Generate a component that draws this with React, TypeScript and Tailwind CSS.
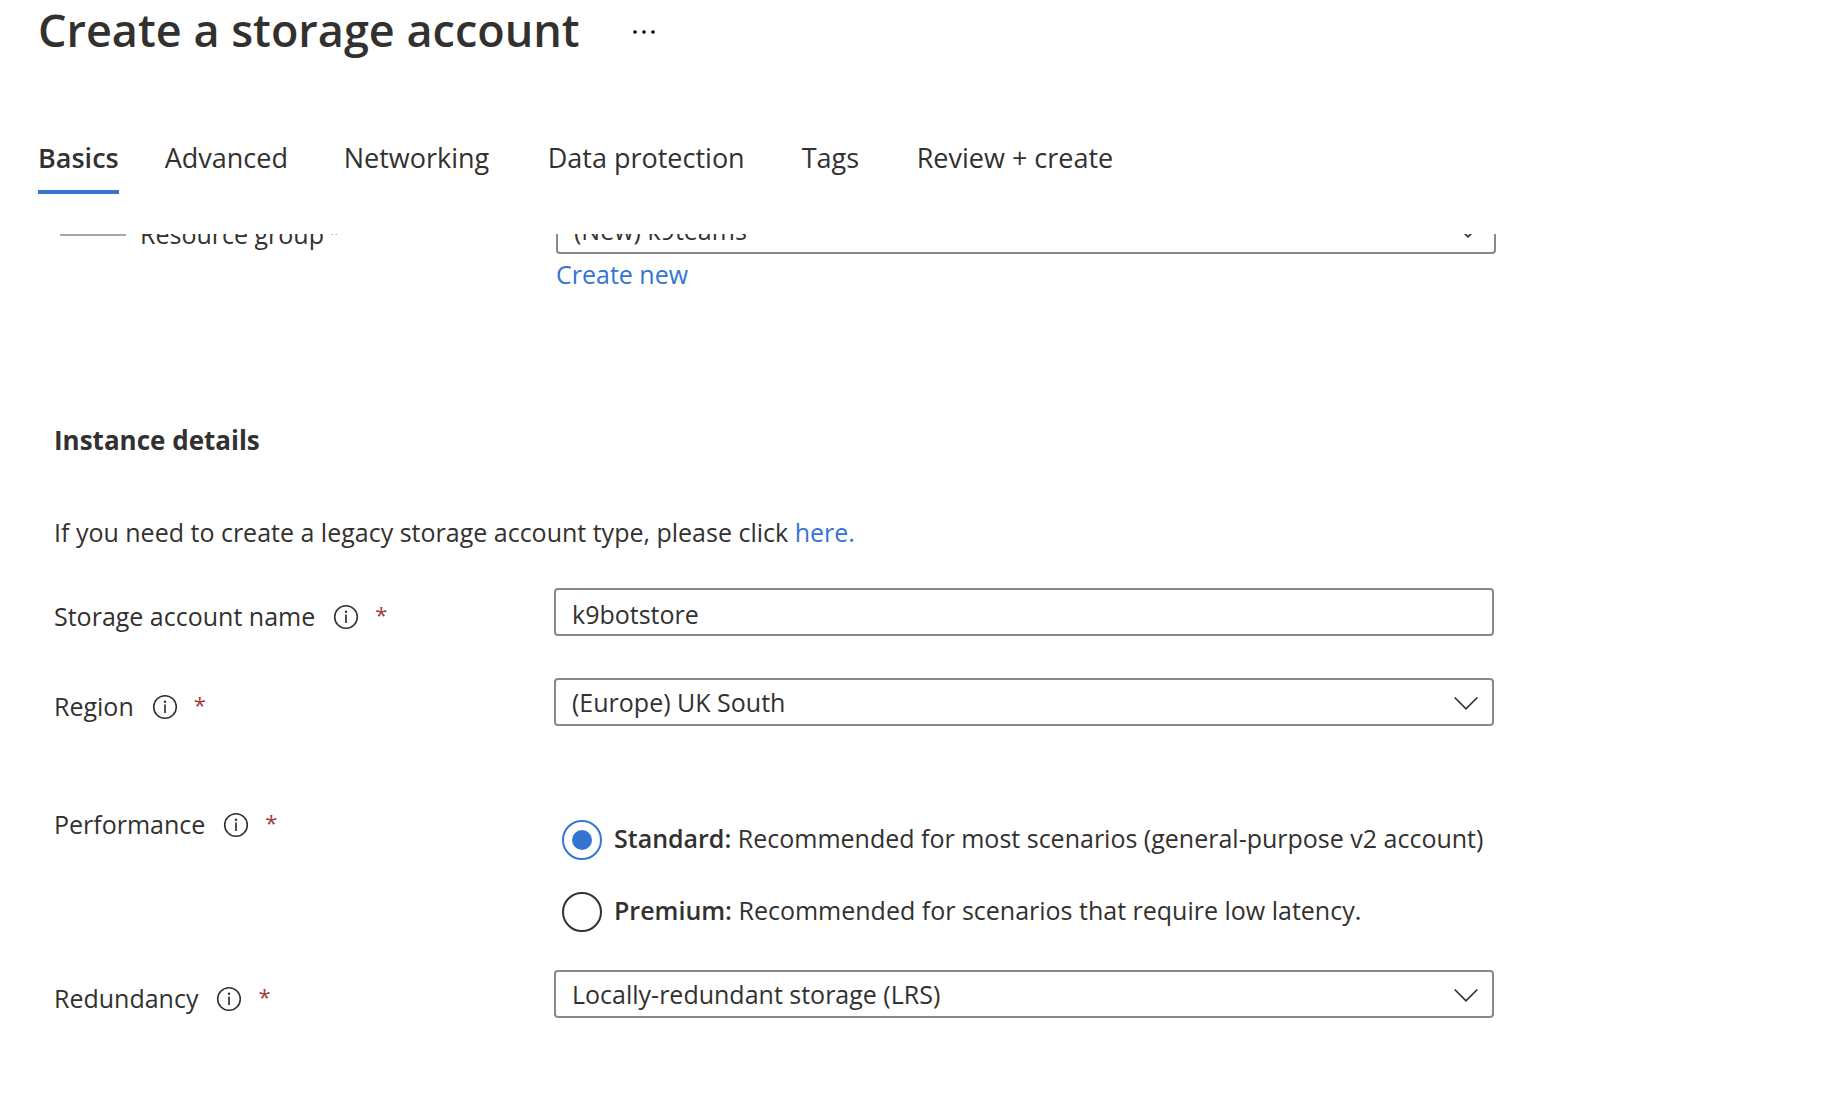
import { useId, useState } from "react";
import type { ReactNode } from "react";
import clsx from "clsx";

const tabs = [
  { label: "Basics", width: "min-w-20" },
  { label: "Advanced", width: "min-w-[133px]" },
  { label: "Networking", width: "min-w-[158px]" },
  { label: "Data protection", width: "min-w-52" },
  { label: "Tags", width: "min-w-[69px]" },
  { label: "Review + create", width: "min-w-48" },
];

function InfoIcon() {
  return (
    <svg width="26" height="26" viewBox="0 0 26 26" fill="none" aria-hidden="true">
      <circle cx="13" cy="13" r="11.3" stroke="#323130" strokeWidth="1.6" />
      <path d="M13 10.5v8.5" stroke="#323130" strokeWidth="1.7" />
      <circle cx="13" cy="7.8" r="1.2" fill="#323130" />
    </svg>
  );
}

function Star() {
  return (
    <span aria-hidden="true" className="block text-[22px] leading-8 text-[#a33a3a]">
      *
    </span>
  );
}

function FieldLabel({ id, text }: { id?: string; text: string }) {
  return (
    <div className="flex items-start pt-2.5">
      <label htmlFor={id}>{text}</label>
      <button type="button" aria-label={`About ${text}`} className="mt-1.5 mr-4 ml-[18px]">
        <InfoIcon />
      </button>
      <Star />
    </div>
  );
}

function Row({ label, children, className }: { label: ReactNode; children: ReactNode; className?: string }) {
  return (
    <div className={clsx("grid grid-cols-[500px_minmax(0,940px)]", className)}>
      {label}
      <div>{children}</div>
    </div>
  );
}

function Select({ id, options }: { id: string; options: string[] }) {
  return (
    <div className="relative">
      <select
        id={id}
        className="h-12 w-full appearance-none rounded border-2 border-[#8a8886] bg-white pr-14 pl-4 text-[#323130] outline-none"
      >
        {options.map((o) => (
          <option key={o}>{o}</option>
        ))}
      </select>
      <svg
        className="pointer-events-none absolute top-[18px] right-4"
        width="24"
        height="14"
        viewBox="0 0 24 14"
        fill="none"
        aria-hidden="true"
      >
        <path d="M.7 1.5 12 12.8 23.3 1.5" stroke="#323130" strokeWidth="1.7" />
      </svg>
    </div>
  );
}

function Radio({
  name,
  checked,
  onChange,
  title,
  text,
}: {
  name: string;
  checked: boolean;
  onChange: () => void;
  title: string;
  text: string;
}) {
  return (
    <label className="flex min-h-10 items-start gap-3">
      <input
        type="radio"
        name={name}
        checked={checked}
        onChange={onChange}
        className="grid size-10 shrink-0 appearance-none place-items-center rounded-full border-2 border-[#323130] outline-none before:size-5 before:rounded-full checked:border-[#3375d0] checked:before:bg-[#3375d0]"
      />
      <span>
        <span className="font-semibold">{title}</span> {text}
      </span>
    </label>
  );
}

export default function App() {
  const [active, setActive] = useState("Basics");
  const [tier, setTier] = useState("standard");
  const [name, setName] = useState("k9botstore");
  const id = useId();

  return (
    <main className="min-h-screen bg-white font-['Open_Sans','Noto_Sans',sans-serif] text-[25px] leading-9 text-[#323130]">
      <header className="flex items-center gap-[52px] pl-[38px]">
        <h1 className="text-[45px] leading-[60px] font-semibold">Create a storage account</h1>
        <button type="button" aria-label="More actions" className="pt-1">
          <svg width="26" height="6" viewBox="0 0 26 6" fill="#000" aria-hidden="true">
            <circle cx="3" cy="3" r="1.8" />
            <circle cx="12" cy="3" r="1.8" />
            <circle cx="21" cy="3" r="1.8" />
          </svg>
        </button>
      </header>

      <nav role="tablist" className="mt-20 flex gap-[46px] pl-[38px] text-[27px]">
        {tabs.map((t) => (
          <button
            key={t.label}
            type="button"
            role="tab"
            aria-selected={active === t.label}
            onClick={() => setActive(t.label)}
            className={clsx(
              "border-b-4 pb-3.5 text-left whitespace-nowrap",
              t.width,
              active === t.label ? "border-[#3375d0] font-semibold" : "border-transparent",
            )}
          >
            {t.label}
          </button>
        ))}
      </nav>

      <form className="mt-10 overflow-hidden pr-6 pb-16 pl-[54px]" onSubmit={(e) => e.preventDefault()}>
        <Row
          className="-mt-7 ml-0.5"
          label={
            <div className="flex items-start pt-2.5 pl-1">
              <span className="mt-[18px] mr-3.5 h-0.5 w-[66px] bg-[#a6a6a6]" />
              <label htmlFor={`${id}-group`} className="mr-1">
                Resource group
              </label>
              <Star />
            </div>
          }
        >
          <Select id={`${id}-group`} options={["(New) k9teams"]} />
          <a href="#create" className="mt-0.5 block w-fit text-[#3375d0]">
            Create new
          </a>
        </Row>

        <h2 className="mt-[130px] text-[26px] leading-9 font-bold">Instance details</h2>
        <p className="mt-14">
          If you need to create a legacy storage account type, please click{" "}
          <a href="#legacy" className="text-[#3375d0]">
            here.
          </a>
        </p>

        <Row className="mt-[38px]" label={<FieldLabel id={`${id}-name`} text="Storage account name" />}>
          <input
            id={`${id}-name`}
            value={name}
            onChange={(e) => setName(e.target.value)}
            className="block h-12 w-full rounded border-2 border-[#8a8886] px-4 pt-1 outline-none"
          />
        </Row>

        <Row className="mt-[42px]" label={<FieldLabel id={`${id}-region`} text="Region" />}>
          <Select id={`${id}-region`} options={["(Europe) UK South"]} />
        </Row>

        <Row className="mt-[70px]" label={<FieldLabel text="Performance" />}>
          <div role="radiogroup" aria-label="Performance" className="flex flex-col gap-8 pt-6 pl-2">
            <Radio
              name="performance"
              checked={tier === "standard"}
              onChange={() => setTier("standard")}
              title="Standard:"
              text="Recommended for most scenarios (general-purpose v2 account)"
            />
            <Radio
              name="performance"
              checked={tier === "premium"}
              onChange={() => setTier("premium")}
              title="Premium:"
              text="Recommended for scenarios that require low latency."
            />
          </div>
        </Row>

        <Row className="mt-[38px]" label={<FieldLabel id={`${id}-redundancy`} text="Redundancy" />}>
          <Select id={`${id}-redundancy`} options={["Locally-redundant storage (LRS)"]} />
        </Row>
      </form>
    </main>
  );
}
